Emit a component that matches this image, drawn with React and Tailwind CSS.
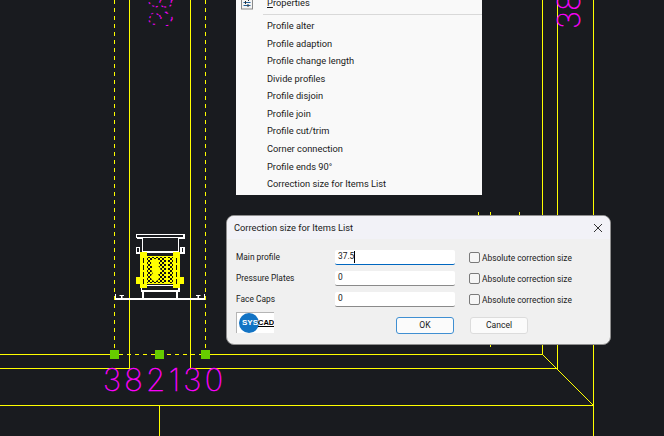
const Y = "#ffff00";
const menu = ["Profile alter","Profile adaption","Profile change length","Divide profiles","Profile disjoin","Profile join","Profile cut/trim","Corner connection","Profile ends 90°","Correction size for Items List"];
const fields = [["Main profile","37.5",true],["Pressure Plates","0",false],["Face Caps","0",false]];

function CadCanvas() {
  return (
    <svg className="absolute inset-0" width="664" height="436" viewBox="0 0 664 436">
      <defs>
        <pattern id="chk" width="4" height="4" patternUnits="userSpaceOnUse">
          <rect width="4" height="4" fill={Y} />
          <rect width="2" height="2" fill="#111" />
          <rect x="2" y="2" width="2" height="2" fill="#111" />
        </pattern>
      </defs>
      <g stroke={Y} strokeWidth="1" fill="none" shapeRendering="crispEdges">
        <path d="M129.5 0V368.5H0M190.5 0V368.5H557.5V0M542.5 0V354.5M593.5 0V405.5H0M0 354.5H114M205 354.5H542.5M159.5 405.5V436M593.5 405V436" />
        <path d="M114.5 0V350M205.5 0V350" strokeDasharray="4 4" />
        <path d="M119 354.5H201" strokeDasharray="4 4" />
        <path d="M478.5 212V215M490.5 212V215M519.5 212V215M490.5 344V347" />
        <path d="M542.5 354.5L593.5 405.5" />
      </g>
      <g fill="#66cc00">
        <rect x="110" y="350" width="9" height="9" />
        <rect x="155" y="350" width="9" height="9" />
        <rect x="201" y="350" width="9" height="9" />
      </g>

      <text x="103" y="391" fill="#ff00ff" stroke="#ff00ff" strokeWidth="0.5" fontFamily="Inter, sans-serif" fontWeight="100" fontSize="31" textLength="120">382130</text>
      <g fontFamily="Inter, sans-serif" fontWeight="100" fontSize="31">
        <text transform="translate(580 29) rotate(-90)" fill="#ff00ff" stroke="#ff00ff" strokeWidth="0.5">382130</text>
        <text transform="translate(172 28) rotate(-90)" fill="none" stroke="#ff00ff" strokeWidth="1" strokeDasharray="2 7">382130</text>
      </g>

      <g stroke="#fff" strokeWidth="1.2" fill="none" shapeRendering="crispEdges">
        <path d="M136.5 238V234.5H184V238H181.5M136.5 238H139" />
        <rect x="142.5" y="237.5" width="36" height="14" />
        <path d="M139 238H142M179 238H182M136.5 247.5H139.5V253H136.5ZM181 247.5H184V253H181Z" />
        <path d="M146 252.5H174" />
        <path d="M141.5 288V291H179V288M146 285.5H174" />
        <path d="M143 291V298M177 291V298" strokeWidth="2" />
        <path d="M115.5 294V298M204.5 294V298" />
      </g>
      <rect x="115" y="298" width="90" height="2" fill="#fff" />
      <path d="M119.5 295H124V296H122.5V298H121V296H119.5ZM196 295H200.5V296H199V298H197.5V296H196Z" fill="#fff" />

      <g shapeRendering="crispEdges">
        <rect x="140" y="252" width="7" height="36" fill={Y} />
        <rect x="173" y="252" width="7" height="36" fill={Y} />
        <rect x="136" y="277" width="5" height="7" fill={Y} />
        <rect x="179" y="277" width="5" height="7" fill={Y} />
        <rect x="147" y="257" width="19" height="26" fill="url(#chk)" />
        <rect x="168" y="257" width="5" height="26" fill="url(#chk)" />
        <rect x="166" y="256" width="2" height="28" fill={Y} />
        <rect x="147" y="256" width="26" height="1" fill={Y} />
        <rect x="147" y="283" width="26" height="1" fill={Y} />
        <path d="M143.5 258V284M176.5 258V284" stroke="#111" strokeDasharray="5 2" />
      </g>
      <g fill={Y}>
        <circle cx="155" cy="263" r="4" />
        <circle cx="156" cy="270" r="4.5" />
        <circle cx="155" cy="277" r="4" />
      </g>
    </svg>
  );
}

function PropsIcon() {
  return (
    <svg width="12" height="14" viewBox="0 0 12 14" className="shrink-0">
      <rect x="0.5" y="0.5" width="11" height="12.5" fill="#f4f4f4" stroke="#8a8a8a" />
      <path d="M2.5 3.5H9.5M2.5 6.5H9.5M2.5 9.5H9.5" stroke="#1f5f99" />
      <path d="M7.5 2V5M4.5 5V8M7 8V11" stroke="#333" />
    </svg>
  );
}

function Logo() {
  return (
    <div className="relative w-[38px] h-[21px] bg-white border-t border-l border-[#b5b5b5] overflow-hidden">
      <div className="absolute left-[2px] top-[0px] w-[20px] h-[20px] rounded-full bg-[#1273c4]" />
      <span className="absolute left-[5px] top-[4px] text-[8px] leading-[12px] font-bold text-white font-['Liberation_Sans',sans-serif]">SYS</span>
      <span className="absolute left-[21px] top-[4px] text-[7.5px] leading-[12px] font-bold text-black underline font-['Liberation_Sans',sans-serif]">CAD</span>
    </div>
  );
}

export default function App() {
  return (
    <div className="relative w-[664px] h-[436px] overflow-hidden bg-[#191b1f] font-['Roboto',sans-serif]">
      <CadCanvas />

      <div className="absolute left-[236px] top-[-6px] w-[246px] h-[201px] bg-[#f9f9f9] text-[#1a1a1a] text-[9.3px]">
        <div className="h-[18px] flex items-center pl-[5px] gap-[14px]">
          <PropsIcon />
          <span><span className="underline">P</span>roperties</span>
        </div>
        <div className="ml-[27px] mt-[2px] mb-[2px] h-px bg-[#d9d9d9]" />
        {menu.map((m) => (
          <div key={m} className="h-[17.55px] flex items-center pl-[31px] leading-none">{m}</div>
        ))}
      </div>

      <div className="absolute left-[226px] top-[215px] w-[385px] h-[130px] rounded-[8px] bg-[#f0f0f0] border border-[#8f8f8f] overflow-hidden text-[#1a1a1a]">
        <div className="h-[23px] bg-[#f2f2f7] flex items-center justify-between pl-[7px] pr-[7px] text-[9.3px]">
          <span>Correction size for Items List</span>
          <svg width="10" height="10" viewBox="0 0 10 10">
            <path d="M1 1L9 9M9 1L1 9" stroke="#333" strokeWidth="1" />
          </svg>
        </div>
        <div className="pt-[11px] pl-[9px] text-[8.4px]">
          <div className="flex flex-col gap-[7px]">
            {fields.map(([label, value, active]) => (
              <div key={label} className="flex items-center h-[14px]">
                <span className="w-[99px]">{label}</span>
                <div className={`w-[120px] h-[15px] bg-white rounded-[2px] pl-[3px] flex items-center border-b ${active ? "border-[#0067c0] border-b-[1.5px]" : "border-[#8a8a8a]"}`}>
                  <span>{value}</span>
                  {active && <span className="w-px h-[12px] bg-black" />}
                </div>
                <div className="ml-[14px] w-[11px] h-[11px] rounded-[2px] bg-[#f6f6f6] border border-[#7a7a7a]" />
                <span className="ml-[2px] translate-y-[1px]">Absolute correction size</span>
              </div>
            ))}
          </div>
          <div className="mt-[6px] flex items-start">
            <Logo />
            <button className="ml-[122px] mt-[5px] w-[58px] h-[17px] rounded-[3px] bg-[#fbfbfb] border-[1.5px] border-[#3f8fd2] text-[8.6px] leading-none text-[#1a1a1a] font-['Roboto',sans-serif]">OK</button>
            <button className="ml-[16px] mt-[5px] w-[58px] h-[17px] rounded-[3px] bg-[#fbfbfb] border border-[#dcdcdc] text-[8.6px] leading-none text-[#1a1a1a] font-['Roboto',sans-serif]">Cancel</button>
          </div>
        </div>
      </div>
    </div>
  );
}
